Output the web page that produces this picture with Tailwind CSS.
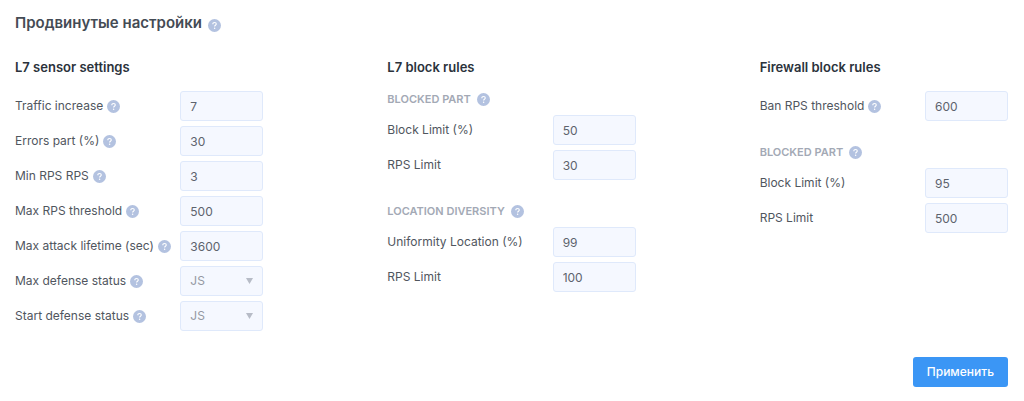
<!DOCTYPE html>
<html lang="ru">
<head>
    <meta charset="UTF-8">
    <meta name="viewport" content="width=device-width, initial-scale=1.0">
    <title>Продвинутые настройки</title>
    <script src="https://cdn.jsdelivr.net/npm/@tailwindcss/browser@4"></script>
</head>
<body class="bg-white font-[Inter,sans-serif] text-[12px] leading-5 text-[#50565e]">
    <!-- Help icon, shared by all labels -->
    <svg class="hidden">
        <symbol id="help" viewBox="0 0 13 13">
            <circle cx="6.5" cy="6.5" r="6.5" fill="#b3c2e0"/>
            <path d="M4.8 5.2C4.8 4.1 5.5 3.5 6.5 3.5s1.8.6 1.8 1.5c0 1.2-1.7 1.2-1.7 2.5" fill="none" stroke="#fff" stroke-width="1.1"/>
            <circle cx="6.6" cy="9.2" r=".75" fill="#fff"/>
        </symbol>
    </svg>

    <form class="pt-[11px] pb-4 pl-[15px] pr-4">
        <header class="flex items-center gap-1.5">
            <h1 class="text-[15px] leading-6 font-semibold text-[#444b54]">Продвинутые настройки</h1>
            <svg class="size-[13px] mt-1"><use href="#help"/></svg>
        </header>

        <div class="mt-[22px] grid grid-cols-3 gap-[124px] whitespace-nowrap">
            <section>
                <h2 class="mb-[14px] text-[13px] leading-5 font-semibold text-[#2b323b]">L7 sensor settings</h2>
                <div class="flex flex-col gap-[5px]">
                    <div class="flex items-center justify-between">
                        <label for="traffic" class="flex items-center gap-1">Traffic increase <svg class="size-[13px]"><use href="#help"/></svg></label>
                        <input id="traffic" type="text" value="7" class="w-[83px] h-[30px] px-[9px] rounded-[3px] border border-[#dfe9fb] bg-[#f5f8ff] text-[#5d636d]">
                    </div>
                    <div class="flex items-center justify-between">
                        <label for="errors" class="flex items-center gap-1">Errors part (%) <svg class="size-[13px]"><use href="#help"/></svg></label>
                        <input id="errors" type="text" value="30" class="w-[83px] h-[30px] px-[9px] rounded-[3px] border border-[#dfe9fb] bg-[#f5f8ff] text-[#5d636d]">
                    </div>
                    <div class="flex items-center justify-between">
                        <label for="min-rps" class="flex items-center gap-1">Min RPS RPS <svg class="size-[13px]"><use href="#help"/></svg></label>
                        <input id="min-rps" type="text" value="3" class="w-[83px] h-[30px] px-[9px] rounded-[3px] border border-[#dfe9fb] bg-[#f5f8ff] text-[#5d636d]">
                    </div>
                    <div class="flex items-center justify-between">
                        <label for="max-rps" class="flex items-center gap-1">Max RPS threshold <svg class="size-[13px]"><use href="#help"/></svg></label>
                        <input id="max-rps" type="text" value="500" class="w-[83px] h-[30px] px-[9px] rounded-[3px] border border-[#dfe9fb] bg-[#f5f8ff] text-[#5d636d]">
                    </div>
                    <div class="flex items-center justify-between">
                        <label for="lifetime" class="flex items-center gap-1">Max attack lifetime (sec) <svg class="size-[13px]"><use href="#help"/></svg></label>
                        <input id="lifetime" type="text" value="3600" class="w-[83px] h-[30px] px-[9px] rounded-[3px] border border-[#dfe9fb] bg-[#f5f8ff] text-[#5d636d]">
                    </div>
                    <div class="flex items-center justify-between">
                        <label for="max-status" class="flex items-center gap-1">Max defense status <svg class="size-[13px]"><use href="#help"/></svg></label>
                        <div class="relative">
                            <select id="max-status" class="block appearance-none w-[83px] h-[30px] px-[9px] rounded-[3px] border border-[#dfe9fb] bg-[#f5f8ff] text-[#9499a3]">
                                <option>JS</option>
                            </select>
                            <svg class="absolute right-[10px] top-[12px] w-[7px] h-[6px] pointer-events-none" viewBox="0 0 7 6"><path d="M0 0h7L3.5 6z" fill="#b7bcc7"/></svg>
                        </div>
                    </div>
                    <div class="flex items-center justify-between">
                        <label for="start-status" class="flex items-center gap-1">Start defense status <svg class="size-[13px]"><use href="#help"/></svg></label>
                        <div class="relative">
                            <select id="start-status" class="block appearance-none w-[83px] h-[30px] px-[9px] rounded-[3px] border border-[#dfe9fb] bg-[#f5f8ff] text-[#9499a3]">
                                <option>JS</option>
                            </select>
                            <svg class="absolute right-[10px] top-[12px] w-[7px] h-[6px] pointer-events-none" viewBox="0 0 7 6"><path d="M0 0h7L3.5 6z" fill="#b7bcc7"/></svg>
                        </div>
                    </div>
                </div>
            </section>

            <section>
                <h2 class="mb-[14px] text-[13px] leading-5 font-semibold text-[#2b323b]">L7 block rules</h2>
                <h3 class="mb-2 flex items-center gap-1.5 text-[11px] leading-4 font-semibold uppercase text-[#a3a9b5]">Blocked part <svg class="size-[13px]"><use href="#help"/></svg></h3>
                <div class="flex flex-col gap-[5px]">
                    <div class="flex items-center justify-between">
                        <label for="l7-limit">Block Limit (%)</label>
                        <input id="l7-limit" type="text" value="50" class="w-[83px] h-[30px] px-[9px] rounded-[3px] border border-[#dfe9fb] bg-[#f5f8ff] text-[#5d636d]">
                    </div>
                    <div class="flex items-center justify-between">
                        <label for="l7-rps">RPS Limit</label>
                        <input id="l7-rps" type="text" value="30" class="w-[83px] h-[30px] px-[9px] rounded-[3px] border border-[#dfe9fb] bg-[#f5f8ff] text-[#5d636d]">
                    </div>
                </div>
                <h3 class="mt-[23px] mb-2 flex items-center gap-1.5 text-[11px] leading-4 font-semibold uppercase text-[#a3a9b5]">Location diversity <svg class="size-[13px]"><use href="#help"/></svg></h3>
                <div class="flex flex-col gap-[5px]">
                    <div class="flex items-center justify-between">
                        <label for="uniformity">Uniformity Location (%)</label>
                        <input id="uniformity" type="text" value="99" class="w-[83px] h-[30px] px-[9px] rounded-[3px] border border-[#dfe9fb] bg-[#f5f8ff] text-[#5d636d]">
                    </div>
                    <div class="flex items-center justify-between">
                        <label for="location-rps">RPS Limit</label>
                        <input id="location-rps" type="text" value="100" class="w-[83px] h-[30px] px-[9px] rounded-[3px] border border-[#dfe9fb] bg-[#f5f8ff] text-[#5d636d]">
                    </div>
                </div>
            </section>

            <section>
                <h2 class="mb-[14px] text-[13px] leading-5 font-semibold text-[#2b323b]">Firewall block rules</h2>
                <div class="flex items-center justify-between">
                    <label for="ban-rps" class="flex items-center gap-1">Ban RPS threshold <svg class="size-[13px]"><use href="#help"/></svg></label>
                    <input id="ban-rps" type="text" value="600" class="w-[83px] h-[30px] px-[9px] rounded-[3px] border border-[#dfe9fb] bg-[#f5f8ff] text-[#5d636d]">
                </div>
                <h3 class="mt-[23px] mb-2 flex items-center gap-1.5 text-[11px] leading-4 font-semibold uppercase text-[#a3a9b5]">Blocked part <svg class="size-[13px]"><use href="#help"/></svg></h3>
                <div class="flex flex-col gap-[5px]">
                    <div class="flex items-center justify-between">
                        <label for="fw-limit">Block Limit (%)</label>
                        <input id="fw-limit" type="text" value="95" class="w-[83px] h-[30px] px-[9px] rounded-[3px] border border-[#dfe9fb] bg-[#f5f8ff] text-[#5d636d]">
                    </div>
                    <div class="flex items-center justify-between">
                        <label for="fw-rps">RPS Limit</label>
                        <input id="fw-rps" type="text" value="500" class="w-[83px] h-[30px] px-[9px] rounded-[3px] border border-[#dfe9fb] bg-[#f5f8ff] text-[#5d636d]">
                    </div>
                </div>
            </section>
        </div>

        <div class="mt-[26px] flex justify-end">
            <button type="submit" class="h-[30px] px-[14px] rounded-[3px] bg-[#3b96f5] font-medium text-white">Применить</button>
        </div>
    </form>
</body>
</html>
